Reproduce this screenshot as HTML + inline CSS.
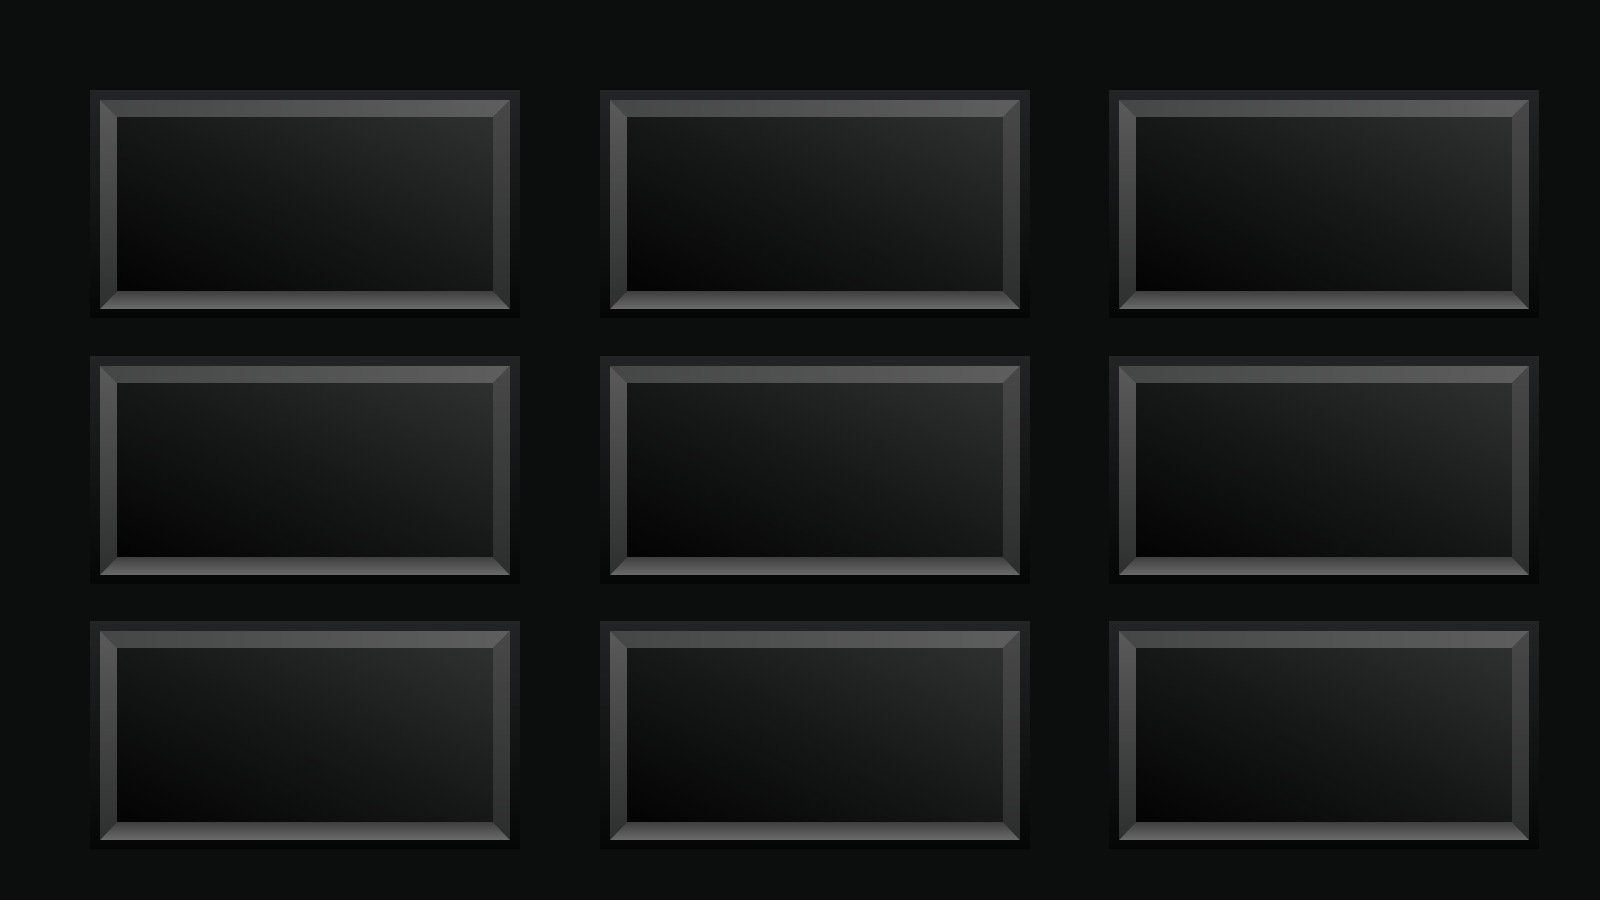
<!DOCTYPE html>
<html><head><style>
html,body{margin:0;padding:0;background:#0c0e0e;width:1600px;height:900px;overflow:hidden}
svg{display:block}
</style></head><body>
<svg width="1600" height="900" viewBox="0 0 1600 900" xmlns="http://www.w3.org/2000/svg">
<defs>
<linearGradient id="fr" x1="0" y1="0" x2="0" y2="1"><stop offset="0" stop-color="#222425"/><stop offset="1" stop-color="#050606"/></linearGradient>
<linearGradient id="face" x1="1" y1="0" x2="0" y2="1"><stop offset="0" stop-color="#2f3030"/><stop offset="0.5" stop-color="#161717"/><stop offset="1" stop-color="#030303"/></linearGradient>
<linearGradient id="top" x1="0" y1="0" x2="1" y2="0"><stop offset="0" stop-color="#454646"/><stop offset="1" stop-color="#5e5e5e"/></linearGradient>
<linearGradient id="bot" x1="0" y1="0" x2="1" y2="0"><stop offset="0" stop-color="#4a4a4a"/><stop offset="1" stop-color="#5a5a5a"/></linearGradient>
<linearGradient id="botv" x1="0" y1="0" x2="0" y2="1"><stop offset="0" stop-color="#3e3e3e"/><stop offset="1" stop-color="#6a6a6a"/></linearGradient>
<linearGradient id="lft" x1="0" y1="0" x2="0" y2="1"><stop offset="0" stop-color="#5a5a5a"/><stop offset="1" stop-color="#2e2f2f"/></linearGradient>
<linearGradient id="rgt" x1="0" y1="0" x2="0" y2="1"><stop offset="0" stop-color="#484848"/><stop offset="1" stop-color="#2c2d2d"/></linearGradient>
<g id="t">
<rect x="0" y="0" width="430" height="228" fill="url(#fr)"/>
<rect x="27" y="27" width="376" height="174" fill="url(#face)"/>
<polygon points="10,10 420,10 403,27 27,27" fill="url(#top)"/>
<polygon points="10,219 420,219 403,201 27,201" fill="url(#botv)"/>
<polygon points="10,10 27,27 27,201 10,219" fill="url(#lft)"/>
<polygon points="420,10 403,27 403,201 420,219" fill="url(#rgt)"/>
</g>
</defs>
<use href="#t" x="90" y="90"/><use href="#t" x="600" y="90"/><use href="#t" x="1109" y="90"/>
<use href="#t" x="90" y="356"/><use href="#t" x="600" y="356"/><use href="#t" x="1109" y="356"/>
<use href="#t" x="90" y="621"/><use href="#t" x="600" y="621"/><use href="#t" x="1109" y="621"/>
</svg>
</body></html>
